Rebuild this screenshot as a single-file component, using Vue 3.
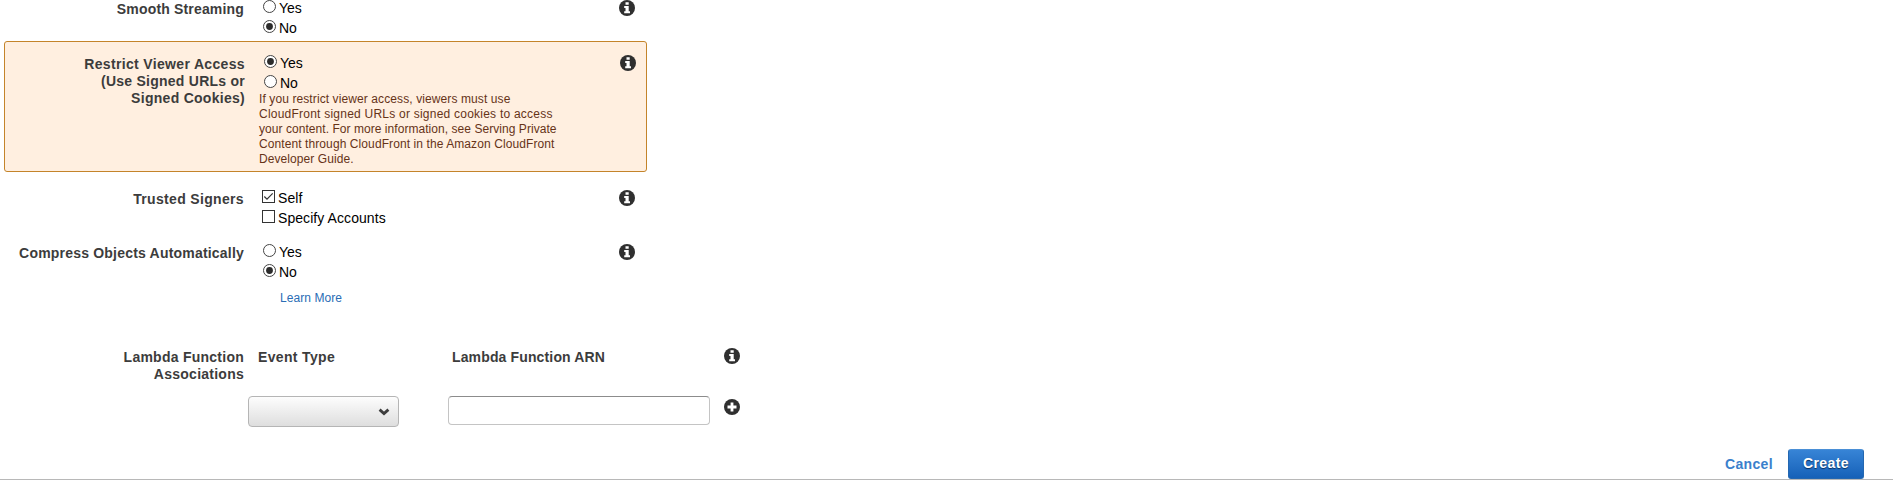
<script setup>
const rows = [
  { id: 'smooth', label: [['Smooth Streaming', 0.17]], type: 'radio', options: [['Yes', false], ['No', true]] },
  {
    id: 'restrict',
    label: [['Restrict Viewer Access', 0.34], ['(Use Signed URLs or', 0.25], ['Signed Cookies)', 0.28]],
    type: 'radio',
    options: [['Yes', true], ['No', false]],
    note: [
      ['If you restrict viewer access, viewers must use', 0.1],
      ['CloudFront signed URLs or signed cookies to access', 0.23],
      ['your content. For more information, see Serving Private', 0.05],
      ['Content through CloudFront in the Amazon CloudFront', 0.09],
      ['Developer Guide.', 0.08],
    ],
  },
  { id: 'signers', label: [['Trusted Signers', 0.33]], type: 'check', options: [['Self', true], ['Specify Accounts', false]] },
  { id: 'compress', label: [['Compress Objects Automatically', 0.2]], type: 'radio', options: [['Yes', false], ['No', true]], link: 'Learn More' },
]
const tracking = (px) => ({ letterSpacing: px + 'px' })
</script>

<template>
  <main class="page">
    <section v-for="row in rows" :key="row.id" class="row" :class="row.id">
      <div class="label">
        <div v-for="[line, space] in row.label" :key="line" :style="tracking(space)">{{ line }}</div>
      </div>
      <div class="field">
        <div v-for="[text, on] in row.options" :key="text" class="option" :class="row.type">
          <svg v-if="row.type === 'radio'" width="13" height="13" viewBox="0 0 13 13">
            <circle cx="6.5" cy="6.5" r="6" fill="#fff" stroke="#444" />
            <circle v-if="on" cx="6.5" cy="6.5" r="3.4" fill="#2b2b2b" />
          </svg>
          <svg v-else width="13" height="13" viewBox="0 0 13 13">
            <rect x=".5" y=".5" width="12" height="12" fill="#fff" stroke="#333" />
            <path v-if="on" d="M2.300 6.500 5 9.200l5.700-5.900" fill="none" stroke="#333" stroke-width="1.200" />
          </svg>
          <span>{{ text }}</span>
        </div>
        <div v-if="row.note" class="note">
          <div v-for="[line, space] in row.note" :key="line" :style="tracking(space)">{{ line }}</div>
        </div>
        <a v-if="row.link" class="learn">{{ row.link }}</a>
      </div>
      <svg class="info" width="16" height="16" viewBox="0 0 16 16">
        <circle cx="8" cy="8" r="8" fill="#2f2f2f" />
        <path d="M6.500 2.300h3.200v2.500H6.500zM5.200 6h4.500v5.200h1.300v2H5.200v-2h1.300V8H5.200z" fill="#fff" />
      </svg>
    </section>

    <section class="lambda">
      <div class="label">
        <div>Lambda Function</div>
        <div>Associations</div>
      </div>
      <div class="event">
        <div class="head">Event Type</div>
        <div class="select">
          <svg width="12" height="8" viewBox="0 0 12 8">
            <path d="M1.600 1.600 6 5.600l4.400-4" fill="none" stroke="#3d3d3d" stroke-width="2.800" />
          </svg>
        </div>
      </div>
      <div class="arn">
        <div class="head">Lambda Function ARN</div>
        <div class="input"></div>
      </div>
      <div class="icons">
        <svg width="16" height="16" viewBox="0 0 16 16">
          <circle cx="8" cy="8" r="8" fill="#2f2f2f" />
          <path d="M6.500 2.300h3.200v2.500H6.500zM5.200 6h4.500v5.200h1.300v2H5.200v-2h1.300V8H5.200z" fill="#fff" />
        </svg>
        <svg width="16" height="16" viewBox="0 0 16 16">
          <circle cx="8" cy="8" r="8" fill="#2f2f2f" />
          <path d="M6.600 3.500h2.800v3.100h3.100v2.800H9.400v3.100H6.600V9.400H3.500V6.600h3.100z" fill="#fff" />
        </svg>
      </div>
    </section>

    <footer class="footer">
      <a class="cancel">Cancel</a>
      <button class="create">Create</button>
    </footer>
  </main>
</template>

<style>
body { margin: 0; background: #fff; overflow: hidden; }
</style>

<style scoped>
.page {
  width: 1893px;
  height: 488px;
  overflow: hidden;
  box-sizing: border-box;
  font-family: "Liberation Sans", Arial, sans-serif;
  font-size: 14px;
  color: #000;
}
svg { display: block; flex: none; }
.row {
  display: grid;
  grid-template-columns: 244px 375px 16px;
  box-sizing: border-box;
  width: 650px;
}
.label, .head {
  font-weight: bold;
  line-height: 17px;
  letter-spacing: 0.25px;
  color: #3c3c3c;
  white-space: nowrap;
}
.label { text-align: right; padding-top: 1px; }
.field { padding-left: 19px; }
.smooth { height: 41px; }
.restrict {
  width: 643px;
  height: 131px;
  margin-left: 4px;
  padding-top: 13px;
  grid-template-columns: 240px 375px 16px;
  border: 1px solid #c4842a;
  border-radius: 3px;
  background: #ffefe0;
}
.signers { height: 54px; margin-top: 18px; }
.compress { height: 105px; }
.option {
  display: flex;
  height: 20px;
  gap: 3px;
  line-height: 16px;
  white-space: nowrap;
}
.option span { height: 16px; }
.option.check { margin-left: -1px; letter-spacing: 0.07px; }
.note {
  margin: -3px 0 0 -5px;
  font-size: 12px;
  line-height: 15px;
  color: #663318;
  white-space: nowrap;
}
.learn {
  display: block;
  margin: 7px 0 0 17px;
  font-size: 12px;
  line-height: 15px;
  letter-spacing: 0.07px;
  color: #2a6db5;
}
.lambda {
  display: flex;
  height: 100px;
}
.lambda .label { width: 244px; padding-top: 0; }
.event { width: 151px; margin-left: 4px; }
.event .head { padding-left: 10px; letter-spacing: 0.35px; }
.arn { width: 262px; margin-left: 49px; }
.arn .head { padding-left: 4px; letter-spacing: 0.14px; }
.select {
  display: flex;
  justify-content: flex-end;
  align-items: center;
  box-sizing: border-box;
  height: 31px;
  margin-top: 30px;
  padding-right: 8px;
  border: 1px solid #b5b5b5;
  border-radius: 4px;
  background: linear-gradient(#fdfdfd, #dedede);
}
.input {
  box-sizing: border-box;
  height: 29px;
  margin-top: 30px;
  border: 1px solid #c4c4c4;
  border-top-color: #8c8c8c;
  border-radius: 4px;
  background: #fff;
}
.icons {
  display: flex;
  flex-direction: column;
  gap: 35px;
  margin: -1px 0 0 14px;
}
.footer {
  display: flex;
  justify-content: flex-end;
  align-items: flex-start;
  box-sizing: border-box;
  height: 31px;
  padding-right: 29px;
  border-bottom: 1px solid #b8b8b8;
  font-weight: bold;
}
.cancel {
  margin: 7px 15px 0 0;
  line-height: 16px;
  letter-spacing: 0.35px;
  color: #3a80cc;
}
.create {
  width: 76px;
  height: 30px;
  padding: 0 0 2px;
  border: 1px solid #2467b0;
  border-top-color: #4a8fd6;
  border-radius: 3px;
  background: linear-gradient(#3784d6, #1661b8);
  color: #fff;
  font: bold 14px/16px "Liberation Sans", Arial, sans-serif;
  letter-spacing: 0.4px;
  text-shadow: 0 1px 1px #06305f;
}
</style>
